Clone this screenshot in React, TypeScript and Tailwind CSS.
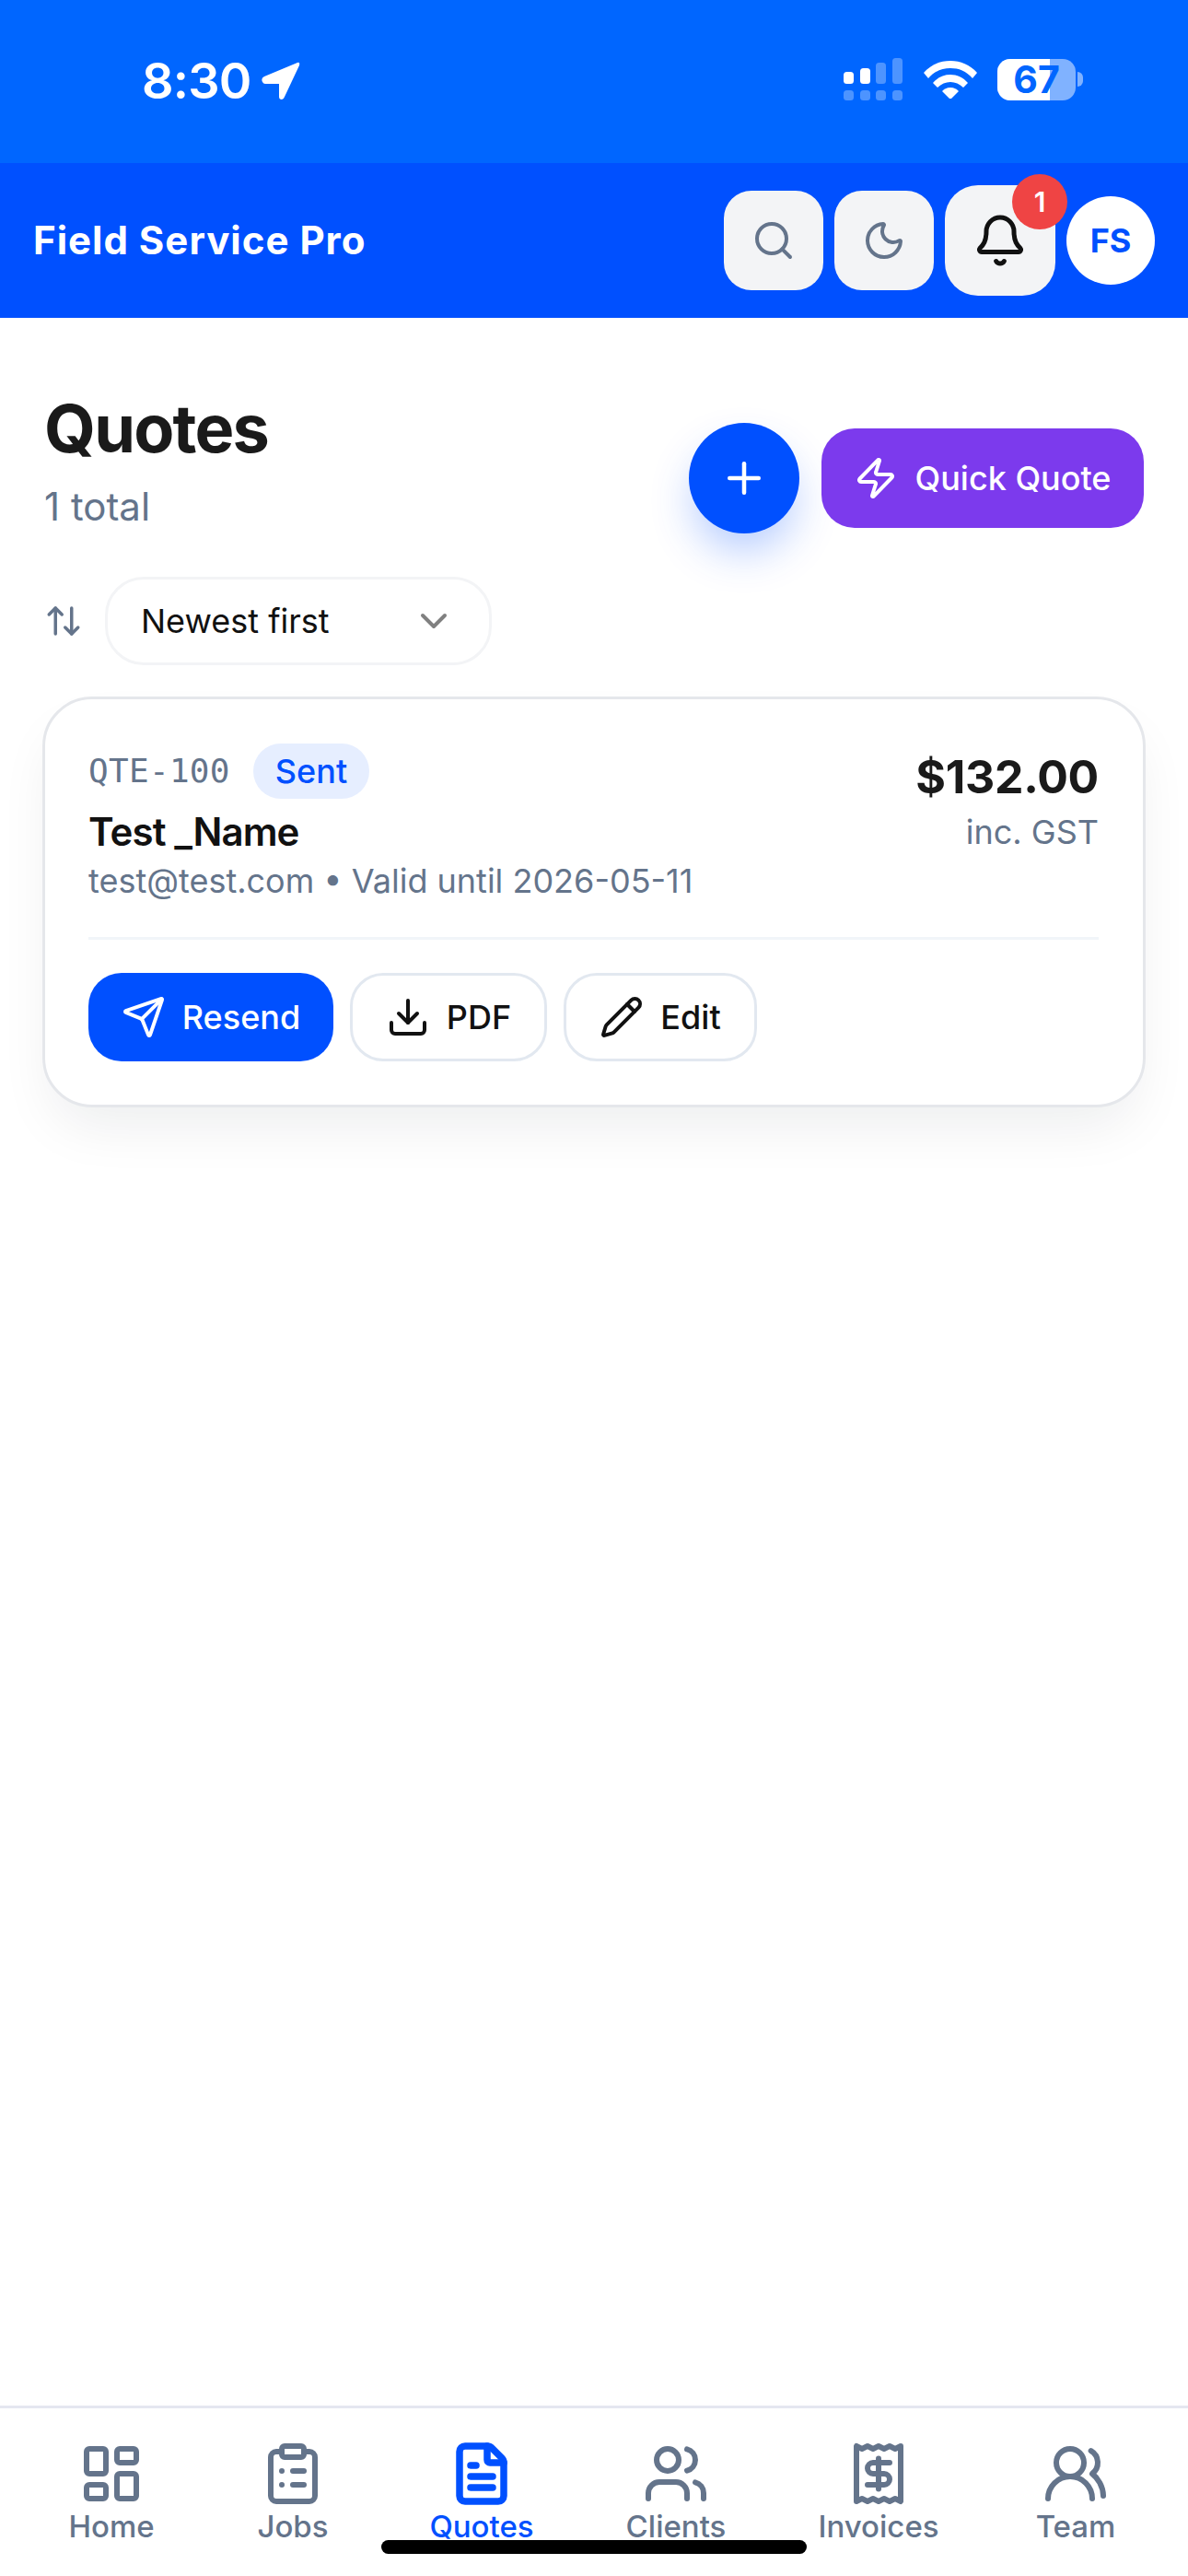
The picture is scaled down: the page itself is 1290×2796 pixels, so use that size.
import React from "react";
import {
  ArrowUpDown, Bell, ChevronDown, ClipboardList, Download, FileText, LayoutDashboard, Moon, Pencil, Plus, Receipt, Search, Send, Users, UsersRound, Zap,
} from "lucide-react";

const navItems = [
  { label: "Home", Icon: LayoutDashboard, w: "w-[242px]" },
  { label: "Jobs", Icon: ClipboardList, w: "w-[152px]" },
  { label: "Quotes", Icon: FileText, w: "w-[258px]", active: true },
  { label: "Clients", Icon: Users, w: "w-[164px]" },
  { label: "Invoices", Icon: Receipt, w: "w-[276px]" },
  { label: "Team", Icon: UsersRound, w: "w-[152px]" },
];

function StatusBar() {
  return (
    <div className="h-[177px] shrink-0 bg-[#0066ff] flex items-start justify-between pl-[154px] pr-[114px] pt-[60px]">
      <div className="flex items-center gap-[11px] text-white">
        <span className="text-[54px] leading-[56px] font-semibold tracking-[-0.800px]">8:30</span>
        <svg width="42" height="42" viewBox="0 0 42 42" fill="white">
          <path d="M39 1 3 16Q-1 18 1 22 2 24 4 24H19V38Q19 41 22 41 24 41 25 38L41 4Q42 0 39 1Z" />
        </svg>
      </div>
      <div className="flex items-center gap-[22px] pt-[3px]">
        <svg width="66" height="46" viewBox="0 0 66 46" fill="white">
          <rect x="1" y="15" width="11" height="13" rx="3.500" />
          <rect x="19" y="11" width="11" height="17" rx="3.500" />
          <rect x="36" y="5" width="11" height="23" rx="3.500" opacity="0.3" />
          <rect x="54" y="0" width="11" height="28" rx="3.500" opacity="0.3" />
          <rect x="1" y="35" width="11" height="11" rx="3.500" opacity="0.3" />
          <rect x="19" y="35" width="11" height="11" rx="3.500" opacity="0.3" />
          <rect x="36" y="35" width="11" height="11" rx="3.500" opacity="0.3" />
          <rect x="54" y="35" width="11" height="11" rx="3.500" opacity="0.3" />
        </svg>
        <svg width="58" height="42" viewBox="0 0 58 42" fill="white">
          <path d="M0 14C8 5 18 1 29 1s21 4 29 13l-5 6C46 12 38 9 29 9s-17 3-24 11Z" />
          <path d="M10 25c5-6 12-9 19-9s14 3 19 9l-5 5c-4-4-9-6-14-6s-10 2-14 6Z" />
          <path d="M20 34c2-2 5-4 9-4s7 2 9 4l-9 9Z" />
        </svg>
        <div className="flex items-center gap-[2px]">
          <div className="relative w-[85px] h-[45px] rounded-[14px] bg-[#80b2ff]">
            <div className="w-[57px] h-full bg-white rounded-l-[14px]" />
            <span className="absolute inset-0 flex items-center justify-center text-[41px] font-bold leading-none text-[#0066ff]">67</span>
          </div>
          <div className="w-[6px] h-[16px] rounded-r-full bg-[#80b2ff]" />
        </div>
      </div>
    </div>
  );
}

function Header() {
  return (
    <header className="h-[168px] shrink-0 bg-[#0050ff] flex items-center justify-between pl-[36px] pr-[36px]">
      <span className="text-[42px] font-bold text-white tracking-[1px] -mt-[2px]">Field Service Pro</span>
      <div className="flex items-center gap-[12px]">
        <button className="w-[108px] h-[108px] rounded-[30px] bg-[#f3f4f6] flex items-center justify-center text-[#64748b]">
          <Search size={48} strokeWidth={2} />
        </button>
        <button className="w-[108px] h-[108px] rounded-[30px] bg-[#f3f4f6] flex items-center justify-center text-[#64748b]">
          <Moon size={48} strokeWidth={2} />
        </button>
        <button className="relative w-[120px] h-[120px] rounded-[36px] bg-[#f3f4f6] flex items-center justify-center text-[#111111]">
          <Bell size={60} strokeWidth={2} />
          <span className="absolute top-[-12px] right-[-13px] w-[60px] h-[60px] rounded-full bg-[#ef4444] text-white text-[30px] font-semibold flex items-center justify-center">1</span>
        </button>
        <div className="w-[96px] h-[96px] rounded-full bg-white text-[#0050ff] text-[36px] font-bold flex items-center justify-center">FS</div>
      </div>
    </header>
  );
}

function Toolbar() {
  return (
    <div className="flex items-start justify-between pl-[48px] pr-[48px] pt-[76px]">
      <div>
        <h1 className="text-[72px] leading-[88px] font-bold tracking-[-1.800px] text-[#1a1a1a]">Quotes</h1>
        <p className="text-[42px] leading-[60px] mt-[11px] text-[#64748b]">1 total</p>
      </div>
      <div className="flex items-center gap-[24px] pt-[38px]">
        <button className="w-[120px] h-[120px] rounded-full bg-[#0050ff] text-white flex items-center justify-center shadow-[0_24px_48px_-6px_rgba(0,80,255,0.3)]">
          <Plus size={54} strokeWidth={2} />
        </button>
        <button className="w-[350px] h-[108px] rounded-[36px] bg-[#7c3aed] text-white flex items-center justify-center gap-[18px] text-[36px] font-medium">
          <Zap size={48} strokeWidth={2} />
          Quick Quote
        </button>
      </div>
    </div>
  );
}

function Sort() {
  return (
    <div className="flex items-center gap-[24px] pl-[48px] mt-[46px]">
      <ArrowUpDown size={42} strokeWidth={2} className="text-[#64748b]" />
      <div className="w-[420px] h-[96px] rounded-[42px] border-[3px] border-[#f3f4f6] bg-white flex items-center justify-between pl-[36px] pr-[36px]">
        <span className="text-[36px] text-[#111111]">Newest first</span>
        <ChevronDown size={48} strokeWidth={2} className="text-[#808080]" />
      </div>
    </div>
  );
}

function OutlineButton({ children, w }: { children: React.ReactNode; w: string }) {
  return (
    <button className={`${w} h-[96px] rounded-[36px] border-[3px] border-[#e2e8f0] bg-white text-[#111111] text-[36px] font-medium flex items-center justify-center gap-[18px]`}>
      {children}
    </button>
  );
}

function QuoteCard() {
  return (
    <div className="mx-[46px] mt-[34px] rounded-[54px] border-[3px] border-[#e5e7eb] bg-white pl-[47px] pr-[48px] pt-[48px] pb-[47px] shadow-[0_30px_60px_-12px_rgba(15,23,42,0.08)]">
      <div className="flex items-start justify-between pb-[37px] border-b-[3px] border-[#f1f5f9]">
        <div>
          <div className="flex items-center gap-[25px] h-[60px]">
            <span className="text-[36px] text-[#64748b] font-['DejaVu_Sans_Mono',monospace] tracking-[0.300px]">QTE-100</span>
            <span className="h-[60px] px-[24px] rounded-full bg-[#e6eeff] text-[#0050ff] text-[36px] font-medium flex items-center">Sent</span>
          </div>
          <div className="text-[42px] leading-[54px] mt-[9px] font-semibold tracking-[-0.900px] text-[#111111]">Test _Name</div>
          <div className="text-[36px] leading-[48px] mt-[2px] text-[#64748b]">test@test.com • Valid until 2026-05-11</div>
        </div>
        <div className="text-right">
          <div className="text-[50px] leading-[60px] mt-[6px] font-bold tracking-[-0.300px] text-[#1a1a1a]">$132.00</div>
          <div className="text-[36px] leading-[48px] mt-[6px] text-[#64748b]">inc. GST</div>
        </div>
      </div>
      <div className="flex gap-[18px] mt-[36px]">
        <button className="w-[266px] h-[96px] rounded-[36px] bg-[#0050ff] text-white text-[36px] font-medium flex items-center justify-center gap-[18px]">
          <Send size={48} strokeWidth={2} />
          Resend
        </button>
        <OutlineButton w="w-[214px]"><Download size={48} strokeWidth={2} />PDF</OutlineButton>
        <OutlineButton w="w-[210px]"><Pencil size={48} strokeWidth={2} />Edit</OutlineButton>
      </div>
    </div>
  );
}

function BottomNav() {
  return (
    <nav className="relative h-[185px] shrink-0 border-t-[3px] border-[#e5e7f0] bg-white flex items-start pt-[35px]">
      {navItems.map(({ label, Icon, w, active }) => (
        <div key={label} className={`${w} flex flex-col items-center ${active ? "text-[#0050ff]" : "text-[#64748b]"}`}>
          <Icon size={72} strokeWidth={active ? 2.500 : 2} />
          <span className="text-[33px] leading-[40px] font-medium mt-[1px]">{label}</span>
        </div>
      ))}
      <div className="absolute left-[414px] top-[143px] w-[462px] h-[15px] rounded-full bg-black" />
    </nav>
  );
}

export default function App() {
  return (
    <div className="w-[1290px] h-[2796px] bg-white flex flex-col overflow-hidden font-['Inter',sans-serif]">
      <StatusBar />
      <Header />
      <main className="flex-1">
        <Toolbar />
        <Sort />
        <QuoteCard />
      </main>
      <BottomNav />
    </div>
  );
}
